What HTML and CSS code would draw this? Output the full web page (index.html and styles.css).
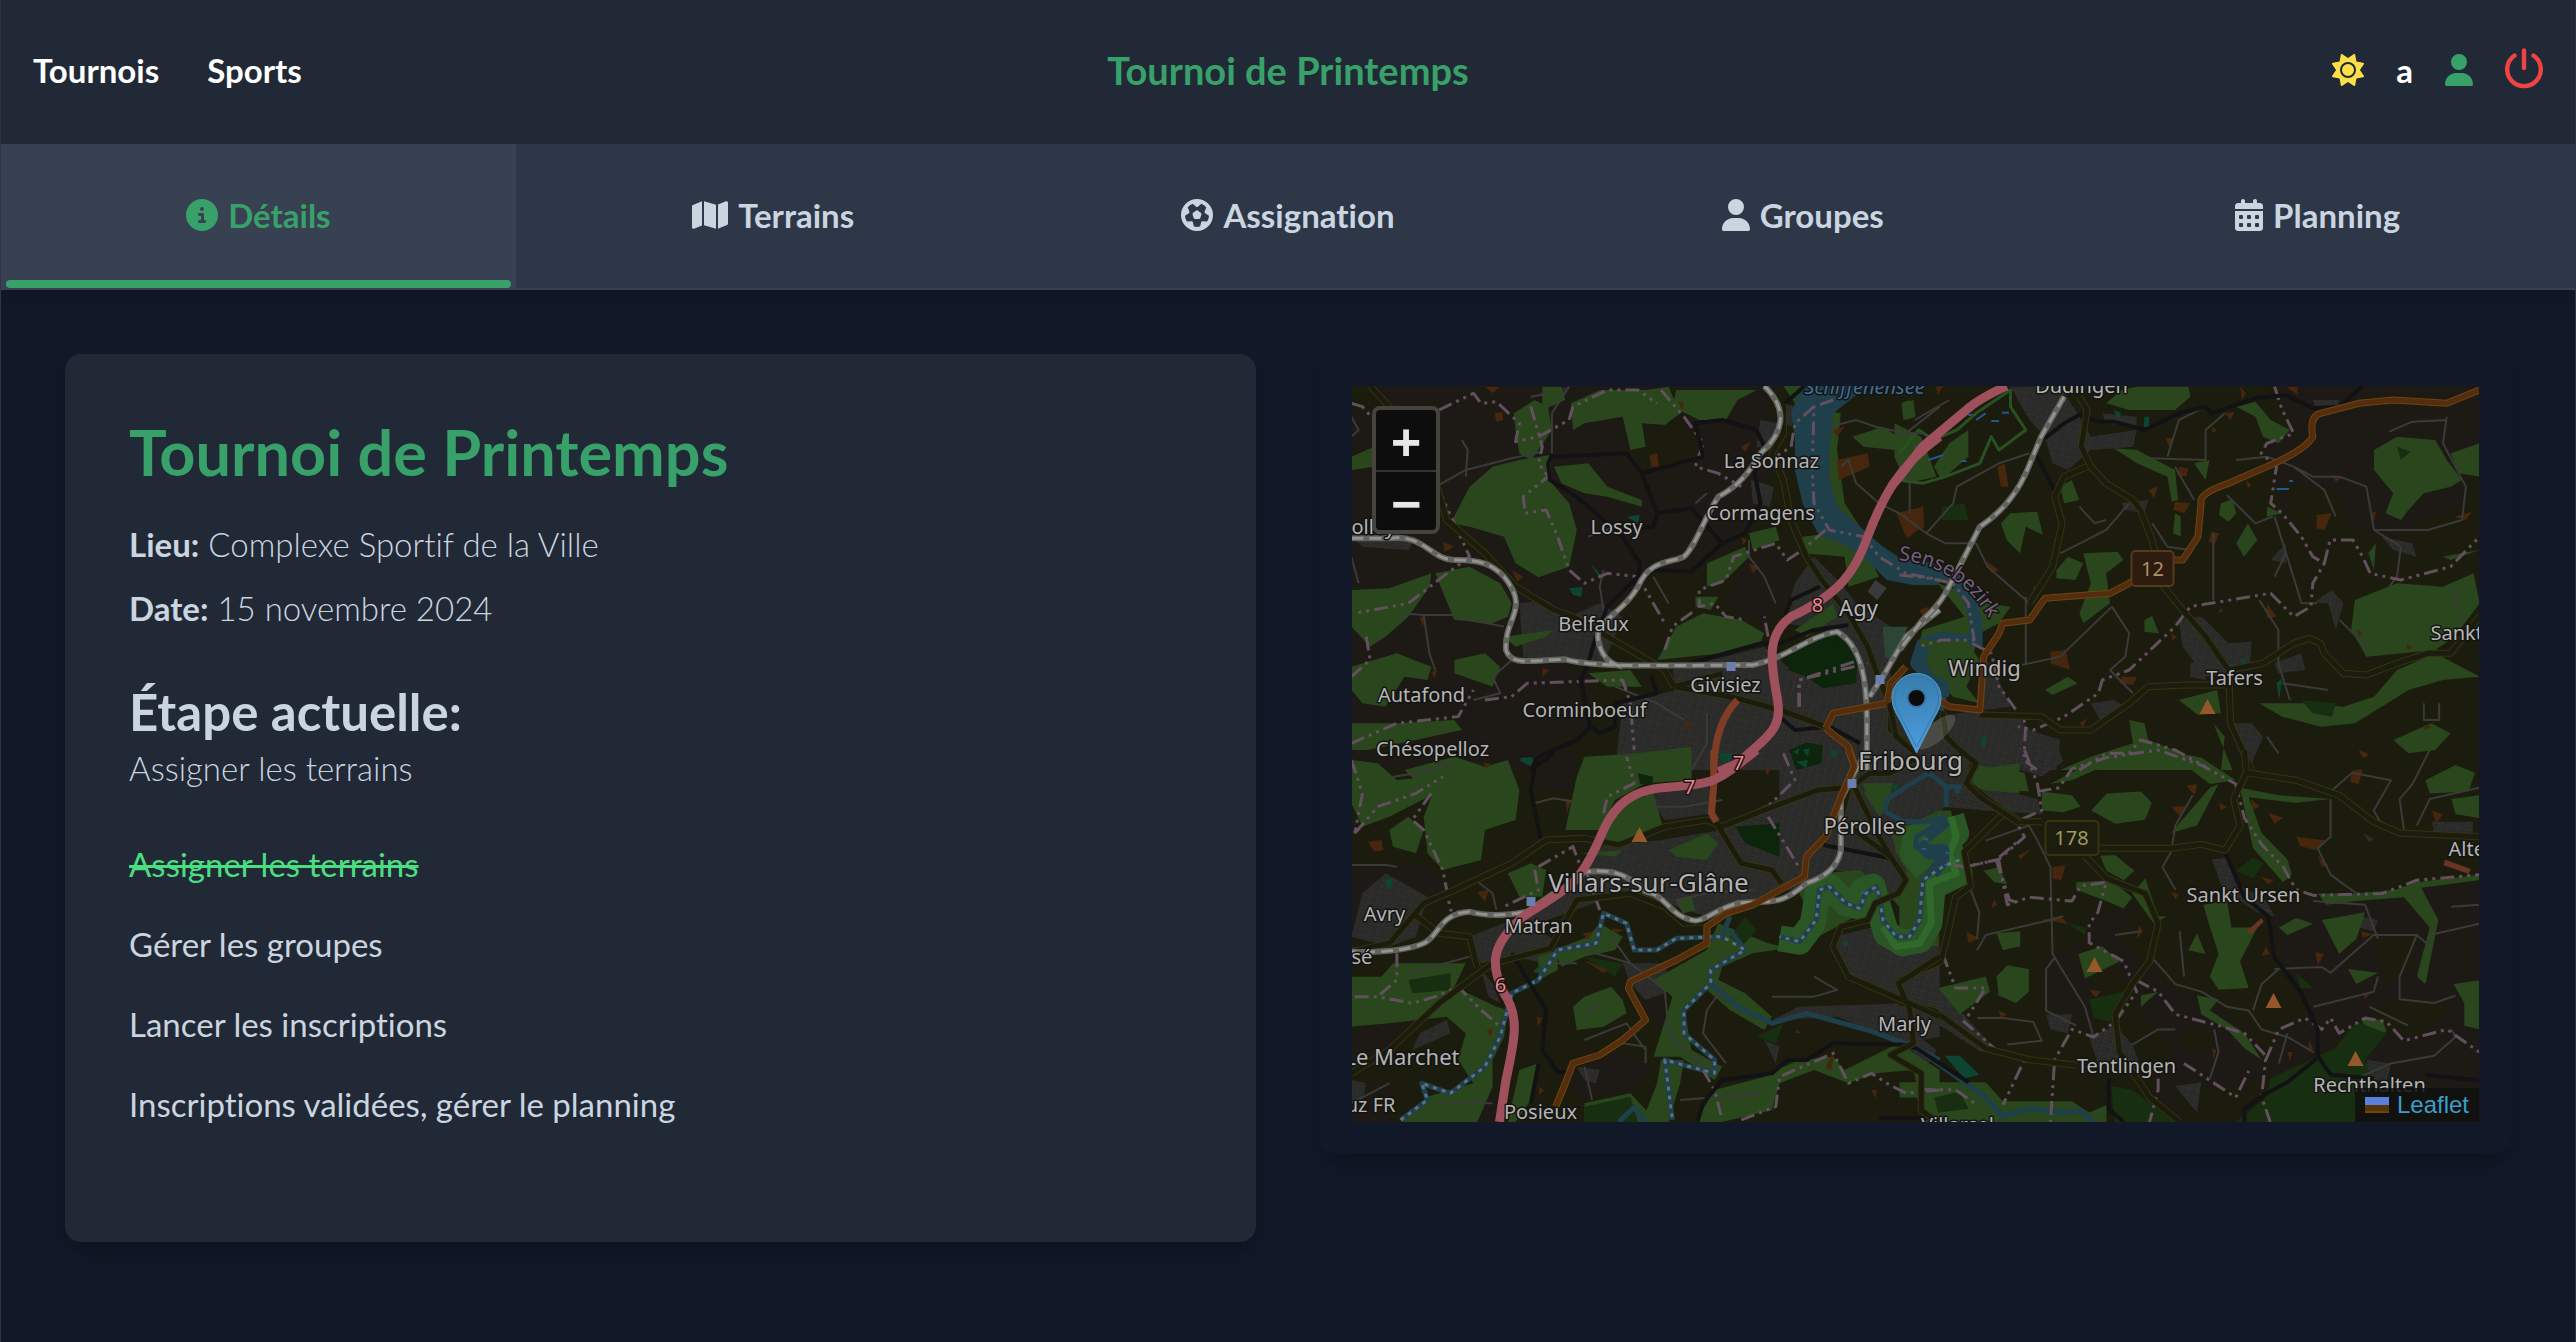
FILE: index.html
```html
<!DOCTYPE html>
<html lang="fr">
<head>
<meta charset="utf-8">
<meta name="viewport" content="width=device-width, initial-scale=1">
<title>Tournoi de Printemps</title>
<link rel="stylesheet" href="styles.css">
</head>
<body>
<header class="topbar">
  <nav class="topbar-nav" aria-label="Navigation principale">
    <a href="#tournois">Tournois</a>
    <a href="#sports">Sports</a>
  </nav>
  <p class="topbar-title">Tournoi de Printemps</p>
  <div class="topbar-user">
    <button class="icon-button sun" type="button" aria-label="Thème clair">
      <svg width="32" height="32" viewBox="0 0 512 512" fill="currentColor"><path d="M361.5 1.2c5 2.1 8.6 6.6 9.6 11.9L391 121l107.9 19.8c5.3 1 9.8 4.6 11.9 9.6s1.5 10.7-1.6 15.2L446.9 256l62.3 90.3c3.1 4.5 3.7 10.2 1.6 15.2s-6.6 8.6-11.9 9.6L391 391 371.1 498.9c-1 5.3-4.6 9.8-9.6 11.9s-10.7 1.5-15.2-1.6L256 446.9l-90.3 62.3c-4.5 3.1-10.2 3.7-15.2 1.6s-8.6-6.6-9.6-11.9L121 391 13.1 371.1c-5.3-1-9.8-4.6-11.9-9.6s-1.5-10.7 1.6-15.2L65.1 256 2.8 165.7c-3.1-4.5-3.7-10.2-1.6-15.2s6.6-8.6 11.9-9.6L121 121 140.9 13.1c1-5.3 4.6-9.8 9.6-11.9s10.7-1.5 15.2 1.6L256 65.1 346.3 2.8c4.5-3.1 10.2-3.7 15.2-1.6zM160 256a96 96 0 1 1 192 0 96 96 0 1 1 -192 0zm224 0a128 128 0 1 0 -256 0 128 128 0 1 0 256 0z"/></svg>
    </button>
    <span class="user-name">a</span>
    <a class="icon-button person" href="#profil" aria-label="Profil">
      <svg width="28" height="32" viewBox="0 0 448 512" fill="currentColor"><path d="M224 256A128 128 0 1 0 224 0a128 128 0 1 0 0 256zm-45.700 48C79.800 304 0 383.800 0 482.300C0 498.700 13.300 512 29.700 512l388.600 0c16.400 0 29.700-13.300 29.700-29.700C448 383.800 368.200 304 269.700 304l-91.400 0z"/></svg>
    </a>
    <button class="icon-button power" type="button" aria-label="Déconnexion">
      <svg width="38" height="44" viewBox="0 0 38 44" fill="none" stroke="currentColor" stroke-width="4.400" stroke-linecap="round"><path d="M9.500 7.500A16.800 16.800 0 1 0 28.500 7.500M19 2.500V20"/></svg>
    </button>
  </div>
</header>

<nav class="tabs" aria-label="Sections du tournoi">
  <a class="tab is-active" href="#details" aria-current="page">
    <svg width="32" height="32" viewBox="0 0 512 512" fill="currentColor"><path fill-rule="evenodd" d="M256 512A256 256 0 1 0 256 0a256 256 0 1 0 0 512zM216 336l24 0 0-64-24 0c-13.300 0-24-10.700-24-24s10.700-24 24-24l48 0c13.300 0 24 10.700 24 24l0 88 8 0c13.300 0 24 10.700 24 24s-10.700 24-24 24l-80 0c-13.300 0-24-10.700-24-24s10.700-24 24-24zm40-208a32 32 0 1 1 0 64 32 32 0 1 1 0-64z"/></svg>
    Détails
  </a>
  <a class="tab" href="#terrains">
    <svg width="36" height="32" viewBox="0 0 576 512" fill="currentColor"><path d="M384 476.100L192 421.200l0-385.300L384 90.800l0 385.300zm32-1.200l0-386.500L543.100 37.500c15.800-6.300 32.900 5.300 32.900 22.300l0 334.800c0 9.800-6 18.600-15.100 22.300L416 474.800zM15.100 95.100L160 37.200l0 386.500L32.900 474.500C17.100 480.800 0 469.200 0 452.200L0 117.400c0-9.800 6-18.600 15.100-22.300z"/></svg>
    Terrains
  </a>
  <a class="tab" href="#assignation">
    <svg width="32" height="32" viewBox="0 0 512 512" fill="currentColor"><path fill-rule="evenodd" d="M417.300 360.100l-71.600-4.800c-5.200-.3-10.300 1.100-14.500 4.200s-7.200 7.400-8.400 12.500l-17.600 69.600C289.500 445.800 273 448 256 448s-33.500-2.200-49.200-6.400L189.200 372c-1.300-5-4.300-9.400-8.400-12.500s-9.300-4.500-14.500-4.200l-71.600 4.800c-17.600-27.200-28.500-59.200-30.400-93.600L125 228.300c4.400-2.800 7.600-7 9.200-11.900s1.400-10.200-.5-15l-26.700-66.600C128 109.200 155.300 89 186.700 76.900l55.200 46c4 3.300 9 5.100 14.100 5.100s10.200-1.800 14.100-5.100l55.200-46c31.300 12.100 58.700 32.300 79.600 57.900l-26.700 66.600c-1.900 4.800-2.100 10.100-.5 15s4.900 9.100 9.200 11.900l60.700 38.200c-1.900 34.400-12.800 66.400-30.400 93.600zM256 512A256 256 0 1 0 256 0a256 256 0 1 0 0 512zm14.100-325.700c-8.400-6.100-19.800-6.100-28.200 0L194 221c-8.400 6.100-11.900 16.900-8.700 26.800l18.300 56.300c3.200 9.900 12.400 16.600 22.800 16.600h59.200c10.400 0 19.600-6.700 22.800-16.600l18.300-56.300c3.200-9.900-.3-20.700-8.700-26.800l-47.900-34.800z"/></svg>
    Assignation
  </a>
  <a class="tab" href="#groupes">
    <svg width="28" height="32" viewBox="0 0 448 512" fill="currentColor"><path d="M224 256A128 128 0 1 0 224 0a128 128 0 1 0 0 256zm-45.700 48C79.800 304 0 383.800 0 482.300C0 498.700 13.300 512 29.700 512l388.600 0c16.400 0 29.700-13.300 29.700-29.700C448 383.800 368.200 304 269.700 304l-91.400 0z"/></svg>
    Groupes
  </a>
  <a class="tab" href="#planning">
    <svg width="28" height="32" viewBox="0 0 448 512" fill="currentColor"><path fill-rule="evenodd" d="M128 0c17.700 0 32 14.300 32 32v32h128V32c0-17.700 14.300-32 32-32s32 14.300 32 32v32h48c26.500 0 48 21.500 48 48v48H0v-48C0 85.500 21.500 64 48 64h48V32c0-17.700 14.300-32 32-32zM0 192h448v272c0 26.500-21.500 48-48 48H48c-26.500 0-48-21.500-48-48zM64 272v32q0 16 16 16h32q16 0 16-16v-32q0-16-16-16H80q-16 0-16 16zM192 272v32q0 16 16 16h32q16 0 16-16v-32q0-16-16-16h-32q-16 0-16 16zM320 272v32q0 16 16 16h32q16 0 16-16v-32q0-16-16-16h-32q-16 0-16 16zM64 400v32q0 16 16 16h32q16 0 16-16v-32q0-16-16-16H80q-16 0-16 16zM192 400v32q0 16 16 16h32q16 0 16-16v-32q0-16-16-16h-32q-16 0-16 16zM320 400v32q0 16 16 16h32q16 0 16-16v-32q0-16-16-16h-32q-16 0-16 16z"/></svg>
    Planning
  </a>
</nav>

<main class="content">
  <section class="card details">
    <h1>Tournoi de Printemps</h1>
    <p class="fact"><strong>Lieu:</strong> Complexe Sportif de la Ville</p>
    <p class="fact"><strong>Date:</strong> 15 novembre 2024</p>
    <h2>Étape actuelle:</h2>
    <p class="step">Assigner les terrains</p>
    <ul class="steps">
      <li class="done">Assigner les terrains</li>
      <li>Gérer les groupes</li>
      <li>Lancer les inscriptions</li>
      <li>Inscriptions validées, gérer le planning</li>
    </ul>
  </section>

  <section class="card map-card" aria-label="Carte">
    <div class="map">
      <svg class="map-canvas" viewBox="0 0 1128 736" preserveAspectRatio="xMidYMid slice">
        <defs>
          <pattern id="streets" width="22" height="20" patternUnits="userSpaceOnUse" patternTransform="rotate(14)">
            <rect width="22" height="20" fill="#292928"/>
            <path d="M0 6H22M7 0V20M7 13L22 16M16 6V0" stroke="#393939" fill="none"/>
          </pattern>
          <path id="arc" d="M547 174Q612 180 644 244"/>
          <linearGradient id="pin" x1="0" y1="0" x2="0" y2="1"><stop offset="0" stop-color="#387cac"/><stop offset="1" stop-color="#4c9de0"/></linearGradient>
        </defs>
        <rect width="1128" height="736" fill="#1b1c0e"/>

        <!-- land cover, one group per tile -->
        <g transform="matrix(.3827 0 0 .3333 -12 -16)">
          <path class="soil" d="M31 48H1110L1150 250 1090 400 1060 520 960 590 830 600 760 700 600 740 480 700 470 860 660 900 650 1060 500 1160 490 1200H31Z"/>
          <path class="soil" d="M1060 560L1130 530 1190 600 1170 700 1110 770 1050 740 1010 680Z"/>
          <path class="field" d="M800 180L890 150 950 230 930 270 800 310 750 240ZM270 450L330 470 440 590 380 560 290 500ZM31 120L90 130V48H31Z"/>
          <path class="town" d="M480 860L470 700 540 690 600 740 680 700 740 740 690 880 560 880ZM870 900L1110 830 1170 890 1300 990 1380 1000 1430 1200H720L740 1000 880 960ZM1160 760L1190 640 1240 560 1310 640 1350 700 1440 770 1440 900 1400 980 1350 840 1290 780ZM1100 150L1150 160 1140 240 1090 230ZM1075 330L1135 350 1125 410 1080 400ZM31 500H200L180 540 60 530ZM1150 100L1200 110 1180 170 1150 150ZM520 70L600 50 560 110Z"/>
          <path class="wood" d="M290 460L340 350 400 290 470 270 550 255 555 340 600 400 620 480 600 590 520 622 460 580 430 500 340 470ZM455 130L510 90 545 110 555 180 520 240 500 270 470 250 460 180ZM605 100L680 60 800 60 860 50 890 130 850 165 790 160 800 230 760 240 740 140 640 160 610 180ZM880 60H1090L1040 90 1010 150 940 150 870 110ZM530 50H580L590 90 530 120ZM560 290L650 280 700 350 790 390V410L700 380 640 370 580 340ZM250 610L340 590 420 640 450 700 440 740 400 760 300 750ZM31 660L130 655 240 610 235 650 180 740 120 800 80 830 31 770ZM300 870L380 850 420 890 400 950 300 910ZM31 890L150 850 240 890 230 930 170 920 120 1010 60 1000 31 960ZM830 870L880 770 950 730 1050 750 1110 790 1100 820 1000 850ZM960 580L1060 530 1070 560 1000 640 960 650ZM930 680L990 680 970 720 930 710ZM31 260L90 230V290L31 300ZM31 1060L150 1060 300 1050 320 1080 160 1120 31 1150ZM700 1160L920 1130 910 1200H690ZM1340 200L1420 170 1460 200 1450 240 1370 230ZM1260 120L1310 130 1300 240 1320 400 1360 470 1330 520 1280 480 1250 300ZM1210 500L1280 490 1370 530 1410 620 1330 650 1320 560 1210 550ZM1160 48H1220L1190 100ZM1470 100L1500 90 1505 140 1480 150ZM1450 160L1520 200 1560 320 1480 340 1450 260ZM1070 490L1140 470 1150 510 1080 540ZM1190 780L1290 700 1300 740 1220 800ZM650 910L760 900 790 950 700 950ZM1340 900L1400 880 1400 980 1350 960ZM430 800L560 780 540 800 460 830Z"/>
          <path class="park" d="M1165 870L1230 810 1300 790 1350 830 1360 940 1300 960 1230 930ZM1180 1130L1250 1120 1260 1190 1190 1190Z"/>
          <path class="pitch" d="M600 655L635 650 632 680 610 675ZM655 578L690 625 680 625ZM1160 1040L1220 1050 1210 1070ZM470 1165L510 1160 500 1190ZM750 440L785 435 780 460ZM985 1160L1020 1150 1010 1180Z"/>
          <path class="yard" d="M380 50L420 50 400 70ZM405 130L425 125 428 150 410 155ZM810 255L830 250 835 290 815 290ZM1050 230L1075 215 1060 245ZM450 600L480 620 465 635ZM270 515L300 530 275 545ZM210 745L225 735 218 770ZM240 905L255 900 248 925ZM530 895L550 900 530 920ZM1300 270L1380 250 1385 290 1305 330ZM1455 430L1525 410 1528 470 1480 500ZM1070 580L1095 590 1080 610ZM1230 860L1250 855 1245 880ZM900 1055L920 1060 905 1085ZM1515 720L1540 710 1530 745ZM885 95L900 95 895 120ZM1050 500L1065 510 1055 525ZM1290 180L1320 170 1300 200Z"/>
          <path class="water-area" d="M1210 48H1380L1290 130 1280 240V330L1300 410 1360 470 1420 530 1500 590 1568 600V645H1500L1430 630 1370 560 1310 520 1250 490 1210 400 1190 300V200L1180 130 1190 100Z"/>
          <path fill="#2c4636" d="M1420 770L1485 770 1450 880 1425 860Z"/>
          <path fill="#3a3a3a" d="M1400 630L1430 655 1405 690 1380 665Z"/>
        </g>
        <g transform="matrix(.3827 0 0 .3333 548 -16)">
          <path class="soil" d="M970 48H1516V200L1480 400 1300 500 1190 480 1120 350 1000 430 970 300 960 200 1030 190Z"/>
          <path class="field" d="M1010 350L1120 350 1140 430 1020 400Z"/>
          <path class="town" d="M290 50H420L460 120 500 200 620 180 610 230 500 240 440 300 400 280 380 200 340 150ZM530 130L620 140 620 170 540 160ZM730 750L790 740 860 820 920 815 915 900 800 920 740 830ZM760 880L800 870 800 930 760 920ZM1080 700L1130 660 1160 700 1140 780 1120 700ZM580 400L650 390 640 430 590 420ZM1080 90L1150 90 1140 130 1090 120ZM110 1040L200 1020 310 1040 340 1080 420 1110 410 1200H60L40 1100ZM200 870L240 880 290 1010 220 1020ZM870 1060L920 1060 950 1100 920 1180ZM500 1000L560 990 590 1010 530 1060ZM1260 500L1340 520 1350 560 1290 540ZM970 570L1010 520 1010 580ZM980 880L1050 850 1060 900 990 910Z"/>
          <path class="wood" d="M540 100L580 60 620 50H755L760 80 720 120 600 120ZM880 110L930 95 970 150 1020 180 990 220 950 200 930 140ZM1240 240L1300 200 1400 210 1430 270 1470 330 1440 350 1370 370 1330 420 1310 450 1270 430 1290 370 1240 300ZM1440 250L1516 220V320L1460 310ZM265 460L290 430 360 425 375 495 330 470 315 550 280 510ZM420 350L450 330 470 390 430 400ZM410 600L440 560 480 580 460 630 410 625ZM480 550L570 545 585 570 540 610 550 700 480 760 470 730 500 640ZM640 750L660 738 678 790 640 785ZM840 400L870 388 880 430 860 455 835 435ZM890 500L910 460 935 510 900 560 880 520ZM560 235L620 240 720 300 728 390 712 395 700 320 620 280ZM720 430L735 440 735 500 715 490ZM1190 690L1300 640 1420 650 1500 610 1516 700 1450 800 1400 840 1220 860 1180 780ZM940 1000L1060 1000 1160 1010 1240 980 1300 900 1400 850 1516 920 1420 930 1330 960 1260 1010 1190 1060 1100 1070 1000 1040ZM730 990L830 960 840 1030 780 1035ZM1290 1110L1390 1060 1440 1090 1400 1140 1330 1150ZM1420 560L1516 540 1440 570ZM380 960L440 920 465 940 400 975ZM600 1050L640 1060 650 1110 740 1150 820 1200H420L500 1160 610 1120ZM130 220L180 180 180 260 110 330 90 290ZM100 640L200 680 230 700 290 710 260 760 210 790 190 860 130 870 50 830 60 780 170 740ZM820 1060L850 1100 840 1200 870 1200ZM1225 550L1245 520 1240 600ZM770 280L810 270 800 330ZM5 100L25 90 40 140 10 150ZM960 410L1000 430 960 440Z"/>
          <path class="thick" d="M110 410L170 400 180 450 110 450ZM60 840L120 850 160 890 80 910ZM1050 990L1140 1000 1130 1040 1080 1030ZM1300 230L1335 245 1310 270Z"/>
          <path class="pitch" d="M640 140L652 140V172L638 170ZM560 120L580 130 570 150ZM890 870L905 865 900 895ZM860 885L880 880 870 900ZM985 940L1000 925 992 990ZM212 1105L228 1105V1125H214Z"/>
          <path class="yard" d="M730 290L755 295 750 320 725 315ZM720 395L760 400 745 430 715 420ZM815 485L835 490 825 520 808 515ZM650 360L675 350 665 385ZM1090 435L1130 430 1110 480 1090 475ZM395 845L435 840 445 900 395 880ZM580 920L620 920 610 945 575 940ZM255 290L275 280 285 350 265 350ZM225 570L260 600 240 610ZM0 440L55 420 60 470 20 505ZM960 700L985 740 960 745ZM1130 315L1160 320 1140 335ZM1230 430L1245 425 1240 455ZM1450 440L1495 425 1480 450ZM890 50L905 70 895 90ZM850 130L875 125 865 150ZM815 170L830 180 818 190ZM695 205L715 205 705 230ZM905 330L920 345 910 355ZM1010 50H1040V75ZM95 50L115 48 100 75ZM350 650L365 655 350 690ZM55 720L75 725 60 745ZM1370 1065L1390 1070 1375 1080ZM1205 1145L1225 1155 1215 1165ZM470 1060L490 1045 480 1070ZM1195 780L1210 790 1200 800ZM1325 820L1340 830 1328 840ZM710 790L725 800 712 812ZM835 715L845 720 838 730Z"/>
          <path class="pond" d="M40 232H65M180 135H200M240 153H260M268 128H286M985 357H1018M1018 333H1028M75 270L115 255M160 273H175M200 150L225 130"/>
          <path class="reserve" d="M0 250L50 180 90 210 150 180 200 130 290 60 290 110 330 180 260 240 240 200 210 280 120 320 60 340 0 330"/>
          <path class="river wide" d="M0 580L70 595 140 620 185 690 200 760 200 830M190 815L110 805 60 825 45 880 80 920 110 960 100 1020"/>
        </g>
        <g transform="matrix(.3827 0 0 .3333 -12 364)">
          <path class="soil" d="M31 0H130L60 200 31 260ZM31 360L240 340 290 440 200 470 120 570H31ZM31 850L130 800 220 790 130 900 31 960ZM40 1010L140 1000 130 1116H31ZM690 900L820 940 760 1020 640 1050 590 1000 610 960ZM260 1060L350 1050 430 1040 410 1116H270ZM500 0L620 0 610 120 520 120ZM800 720L860 760 850 820 800 800Z"/>
          <path class="town" d="M590 430L680 290 840 270 1000 240 1100 170 1250 100 1330 0H1463V120L1320 130 1300 330 1200 400 1100 450 960 500 880 470 760 420 640 470 520 520 470 500ZM800 130L900 110 960 80 980 190 850 210ZM31 560L60 430 120 370 230 440 200 560 130 590ZM340 560L470 500 560 570 540 640 450 620 370 640ZM1290 560L1400 530 1568 520V860L1480 880 1300 800 1130 810 1200 770 1480 760 1330 680ZM370 660L400 700 420 760 390 740ZM740 640L850 640 870 720 800 750 760 700ZM210 850L280 810 290 850 190 900ZM620 950L680 960 670 1000 640 990ZM1110 870L1150 890 1140 940ZM860 820L910 910 870 880ZM1330 800L1480 830 1560 900 1540 940ZM31 990L70 1000 60 1060 31 1060Z"/>
          <path class="wood" d="M170 60L300 20 380 50 440 30 470 120 460 210 380 240 370 330 270 360 230 310 220 200 240 140ZM130 240L180 200 220 240 200 310 140 290ZM31 30L100 40 150 90 240 80 250 130 130 200 60 230 31 160ZM620 80L640 20 920 0 920 90 800 100 720 150 680 240 590 240ZM720 170L820 130 845 230 760 280 690 270ZM860 300L960 250 990 280 960 330 880 320ZM440 370L500 340 540 360 530 440 470 440ZM610 770L640 740 710 710 740 750 750 790 690 830 620 840ZM31 680H110L140 640 330 640 300 710 410 770 440 780 430 860 400 930 400 1010 360 1116H160L230 1040 350 1000 310 930 330 850 280 800 130 820 31 830ZM470 960L520 940 500 1050 460 1116H440ZM820 690L960 600 990 520 1120 580 1200 600 1250 540 1280 420 1360 380 1420 420 1390 470 1300 530 1200 590 1080 610 1000 650 990 690 1060 730 1130 800 1110 840 1020 780 960 720 900 770 920 900 1000 950 980 990 890 920 820 920 810 960 870 740ZM840 930L900 930 890 1000 860 1116H790L830 1000ZM980 1020L1110 980 1160 950 1200 930 1290 920 1320 960 1460 880 1568 960V1116H1530L1500 960 1400 970 1330 1000 1240 960 1150 1000 1130 1080 1000 1116H930ZM640 1060L760 1030 830 1116H640ZM1380 240L1568 130V520L1500 520 1440 440 1490 330ZM560 600L650 560 680 520 740 560 720 600 640 620 580 650ZM630 310L740 300 720 320ZM880 450L920 440 930 480 900 490ZM520 620L570 600 570 660 520 690Z"/>
          <path class="thick" d="M180 690L290 670 290 720 190 730ZM640 620L740 640 720 680ZM640 1070L760 1040 780 1116H640ZM1090 860L1160 820 1140 880ZM1020 560L1060 500 1090 540 1050 590Z"/>
          <path class="park" d="M1035 230L1150 220 1170 290 1150 320 1060 280ZM1180 10L1240 10 1230 50 1190 40ZM780 70L820 80 815 115 785 100Z"/>
          <path class="pitch" d="M120 390L137 385V415H125ZM990 10L1025 10 1020 40ZM470 30L500 25 490 45ZM1315 570L1330 575 1320 595ZM505 665L530 640 520 670ZM1185 15L1200 15 1195 30Z"/>
          <path class="yard" d="M75 275L110 270 115 300 90 305ZM590 145L605 150 595 190ZM360 425L390 420 380 455ZM640 630L700 660 690 670ZM710 535L745 540 720 550ZM635 550L660 545 650 570ZM515 800L530 805 518 830ZM385 840L400 835 395 860ZM1110 55L1125 60 1118 75ZM1390 1020L1405 1020 1400 1045ZM520 1010L535 1020 522 1035ZM1195 840L1205 850 1192 850ZM1270 955L1295 890 1285 960ZM375 40L395 40 385 55Z"/>
          <path class="river" d="M730 1116L770 1072 800 1116M160 1110L230 1050 215 1000 290 1030 380 950 420 860 450 730 520 690 570 600 670 580 690 490 750 520 770 600 830 600 880 565 1000 560 1020 500M1020 540L1060 600 970 660 970 700 900 780 900 850 980 930 980 970 850 930 870 1110M970 700L1040 770 1130 820 1220 790 1380 840 1500 890 1568 930"/>
        </g>
        <g transform="matrix(.4311 0 0 .3776 548 364)">
          <path class="soil" d="M440 440L560 400 500 500 560 560 620 620 760 700 830 780 850 860 740 900 640 870 660 985H560L640 800 560 700 500 560 440 520ZM340 560L420 510 430 600 470 640 450 740 380 730 340 660ZM860 440L940 380 1200 360 1345 350V985H1000L850 940 860 850 880 740 960 700 900 580Z"/>
          <path class="field" d="M1100 500L1200 490 1190 570 1130 620ZM1100 680L1220 650 1280 690 1200 760 1120 740ZM650 740L720 740 740 800 660 790Z"/>
          <path class="town" d="M30 90L120 0 150 0 190 90 320 130 330 170 200 160 100 150ZM190 0H370L380 30 330 70 220 30ZM725 290L760 285 780 350 850 400 870 440 830 430 750 370ZM440 760L500 730 540 780 560 840 460 830ZM340 700L400 700 390 750 350 740ZM1070 440L1110 450 1100 480 1065 470ZM1085 820L1140 830 1130 880 1080 870ZM1235 190L1330 190V220H1240ZM0 590L60 590 100 640 220 790 190 800 40 690 0 650ZM1075 220L1100 235 1090 245ZM0 130L100 140V200L0 170ZM640 890L700 880 690 960ZM0 390L40 400 40 480 0 490Z"/>
          <path class="wood" d="M445 160L480 115 560 110 585 140 570 185 500 195ZM330 110L400 120 420 150 380 165 330 160ZM180 40L290 60 300 110 180 100 160 70ZM350 90L480 10 600 0 700 20 780 80 720 90 650 30 560 20 480 40 400 80ZM465 280L500 278 545 320 520 345 480 320ZM790 100L880 120 1000 130 920 140 810 125 840 220 900 290 910 330 890 350 820 260ZM630 220L720 100 740 90 690 200ZM1220 80L1290 40 1335 60 1320 110 1230 115ZM1280 130L1345 120V180L1290 170ZM705 410L760 400 770 470 830 470 790 560 810 630 740 635 720 600 740 540 715 450ZM670 530L690 485 710 540ZM880 470L920 445 960 460 900 490ZM415 540L470 520 510 560 430 605ZM225 600L250 570 300 580 300 640 270 670 230 650ZM90 630L200 600 210 640 140 700ZM225 485L280 480 280 520 240 530ZM195 320L230 310 250 355 220 350ZM410 350L490 345 540 390 520 420 480 400 410 370ZM1285 620L1345 610V740L1310 730 1310 670ZM1070 710L1120 715 1130 745 1090 760ZM970 380L1060 380 1150 370 1200 350 1345 330 1345 345 1210 365 1250 450 1220 620 1200 600 1230 470 1170 390 1060 400 990 410ZM980 450L1080 430 1060 500 1020 540ZM1040 580L1110 590 1060 620ZM540 380L570 340 600 440 620 440 590 460ZM0 880L200 880 240 930 400 930 440 960 480 940 480 985H60L40 920H0ZM690 650L740 660 720 690 800 750 840 820 800 790 760 740 700 700ZM560 650L600 640 560 680ZM40 160L120 160 140 340 90 400 90 520H0V200Z"/>
          <path class="thick" d="M440 660L520 640 490 720 450 710ZM860 870L1010 790 1060 720 1130 750 1080 820 1100 880 1060 985H780L850 920ZM80 920L140 905 160 950 90 960ZM490 890L540 900 640 985H500ZM780 320L820 285 845 300 820 340ZM920 590L960 630 930 630ZM390 460L435 470 430 490Z"/>
          <path class="pitch" d="M105 810L140 810 185 860 150 870ZM250 150L260 155 252 162Z"/>
          <path class="yard" d="M920 230L990 240 965 265 930 255ZM630 150L665 148 650 175ZM665 95L690 90 685 120ZM355 310L385 305 375 345 355 340ZM855 165L890 180 870 195ZM1050 55L1075 50 1065 90 1045 85ZM1065 0L1088 10 1075 22ZM1235 160L1260 170 1245 195ZM815 130L835 150 820 158ZM220 395L226 410 212 420ZM440 635L468 638 455 655ZM555 465L565 480 550 500ZM850 520L858 540 840 545ZM965 535L985 540 970 570ZM1070 480L1100 488 1075 497ZM630 375L648 382 640 395ZM230 690L250 700 235 710ZM1075 645L1090 645 1080 660ZM950 770L960 790 948 800ZM725 790L735 795 728 820ZM275 280L305 262 280 290ZM155 480L185 500 160 510ZM838 335L868 345 855 355ZM970 280L995 305 980 310ZM740 140L760 150 745 160ZM900 800L912 800 905 825ZM330 450L375 440 390 460Z"/>
          <path fill="#6a3425" d="M1265 290L1325 315 1320 328 1262 305ZM805 480L840 445 845 455 815 487Z"/>
          <path class="river" d="M0 770L40 790 150 880 200 920 240 970 300 950 380 960 420 955 450 985"/>
        </g>
        <g transform="matrix(.3333 0 0 .3333 428 254)">
          <path class="town" d="M0 90L250 0 330 60 340 200 480 250 620 230 720 330V370L600 360 570 430 480 460 500 500 420 540 380 700 330 790 240 700 160 690 60 760 0 740Z"/>
          <path class="park" d="M25 90L60 30 140 0 200 10 235 60 230 130 130 145 80 110ZM30 330L80 308 130 315 125 370 50 390Z"/>
          <path class="wood" d="M250 430L340 430 330 490 300 530 260 470ZM330 550L420 560 380 620 400 720 350 640ZM420 0H560L600 60 560 140 600 190 520 170 430 70ZM570 390L720 370V460L610 450ZM60 760L130 700 240 690 330 760 300 800 180 800 130 840 90 830Z"/>
          <path class="pitch" d="M605 290H620V318H606ZM40 335L60 325 55 345ZM70 330L90 325 85 350ZM50 365L85 360 80 385ZM330 440L360 430 350 450ZM155 330H170V350H156Z"/>
          <path class="gorge" d="M515 530L530 580 500 600 540 700 460 740 450 850 420 900 370 910 320 880 290 780 280 740 250 750 240 800 200 790 150 740 115 760 100 850 60 905 0 895M500 560L410 590 400 640 440 690"/>
          <path class="gorge-in" d="M515 530L530 590 510 640 530 700 450 730 455 850 420 910 350 920 310 860"/>
          <path class="river" d="M445 400L380 440 320 480 318 515 370 545 440 545 500 530M450 400L500 440 540 440 530 460M500 440V500M480 550L410 590 410 620 480 620 500 650 430 720 420 840 390 890 350 890 310 840 300 770 290 740 260 760 240 805 200 790 150 740 120 750 110 840 60 905 0 890"/>
          <path class="river wide" d="M500 540L440 590M420 610L450 640 490 630 490 660 460 700M430 20L420 70 450 120 490 140 490 170"/>
          <path class="pond" d="M430 597H445M427 627H440M498 638H510M495 675H512M243 758H258"/>
        </g>

        <!-- minor roads and boundaries -->
        <g transform="matrix(.3827 0 0 .3333 -12 -16)">
          <path class="lane" d="M260 345L330 300 450 265 530 245M555 250V130L600 50M320 210L335 240 330 320M160 730L220 735 300 735 340 750 430 770M220 735L235 850 250 900M690 600L680 650 690 720M860 700L820 620M650 500L720 470M460 860L400 920 420 970 350 990M31 140L50 180 31 200M1280 170L1350 150 1400 170 1480 190 1568 110M1310 290L1330 270 1350 340 1410 400 1480 440M1490 280V430M1070 510V560L1110 620 1140 700M930 400L960 370M720 950L830 1000 900 1050M31 560L50 640M960 1030V1120L920 1200M500 80L550 70"/>
          <path class="limit" d="M31 100L60 110 90 150M260 120L350 70 370 100 410 95 470 160 460 215 520 200 600 150 610 110 700 60 780 60 830 100M840 60L900 140 950 220 930 290 990 310 1050 350M500 110L530 230 520 280 545 320 480 380 485 430 540 420 570 500 600 600 640 640 700 610 780 620 810 680 850 760M255 350L300 460 340 560 270 620 180 700 40 730M70 800L80 870 31 920M380 990L450 980 490 940 740 930 760 1000 770 1140M1270 480L1210 540 1170 570 1140 520 1030 560 1010 630 940 660 940 710 980 700 1010 740 1060 750M850 840L870 770 930 720M1200 1010V930L1380 880M31 1120L150 1060 310 1040 350 960M1120 800L1110 740"/>
          <path class="limit" d="M1290 90L1240 110 1235 300 1240 400 1280 480 1370 500 1410 560 1480 610 1568 630M1240 110L1190 160 1180 230 1140 260"/>
        </g>
        <g transform="matrix(.3827 0 0 .3333 548 -16)">
          <path class="lane" d="M0 430L70 490 120 520 200 520 230 590 340 700M70 490L140 400 150 350 260 280 340 250M700 260L730 150 800 110M650 265L800 270 800 180 850 130M720 290L770 390M855 375L930 460 975 440M880 270L960 260 1030 290 1080 320 1150 320 1220 350 1240 480M1030 290L1110 360 1140 440M1240 480L1380 480 1470 450 1480 350 1420 220 1430 140M1280 185L1340 155 1430 150M820 490L820 690M330 680V880M555 710L420 860 320 885M555 710L600 790 590 860 550 900 610 970M980 440L1010 550 980 620M1010 550L1040 660 1050 700 1090 700M940 690L990 780V880L1020 990M1240 480L1310 530 1300 620 1280 650M1150 750L1230 840M470 410L510 460 540 450M420 550L540 480 600 400M660 460L700 530 760 540M130 90L40 150M0 190H60M1450 650L1470 750M1370 1000V1050H1410V1000M1000 940L1120 960M960 1100L990 1150"/>
          <path class="limit" d="M980 50L1000 120 1030 190 960 220 945 250 985 290 970 400 1000 430 1050 500 1080 560 1110 580 1080 640 1075 710 1030 740 970 670 760 710 720 770 600 900 530 930 520 970 430 1040 350 1080 310 1070M1110 580L1125 510H1185L1210 560 1230 610 1310 630 1440 590 1516 500M190 820L240 850 260 950 330 1060 325 1170 360 1200M470 1200L540 1150 600 1150 630 1110 720 1140 800 1190"/>
          <path class="limit" d="M0 615L80 625 140 640 180 700 195 810 110 810 50 830"/>
        </g>
        <g transform="matrix(.3827 0 0 .3333 -12 364)">
          <path class="lane" d="M31 345H120L150 350M355 390L400 430 410 480M510 160L560 145 610 155M640 600L760 640 850 720 860 850 920 920 980 960M710 560L760 640M540 640L620 640M800 900L780 870 750 820 640 870M1010 700L960 780 950 850 1010 940M820 170L900 170 1000 150M900 490L880 450 960 430 1080 420M180 670L340 620M260 1060H400M640 950L660 1050M890 1050L1000 1040 1100 1030M1240 680L1300 720 1240 740 1130 740M300 40L200 70 140 80M680 760L640 800M130 1000L31 1060M800 940V890L740 880"/>
          <path class="limit" d="M31 30L60 130 40 250M40 250L100 170 200 130 270 80M240 130L190 210 220 240 270 360 290 480 330 490M40 740H100L190 760 250 740 310 710 370 780 420 830M150 610L150 690 100 740M520 350L610 290 630 350M510 360L520 420 430 470M690 190L700 140 770 100 750 20M640 350L680 480M1160 10L1190 90 1110 180M1120 200L1200 350M950 960L980 1020 1000 1110M1050 1110L1140 1070 1150 980 1230 940 1290 910 1330 1000 1390 970 1430 1000 1480 1030 1568 1020"/>
          <path class="flow" d="M160 1110L230 1050 215 1000 290 1030 380 950 420 860 450 730 520 690 570 600 670 580 690 490 750 520 770 600 830 600 880 565 1000 560 1060 600 970 660 970 700 900 780 900 850 980 930 980 970 850 930 870 1110"/>
        </g>
        <g transform="matrix(.4311 0 0 .3776 548 364)">
          <path class="lane" d="M1000 130V230L970 260 1000 330 1060 380M680 120L640 200 630 270 610 310 640 370M1230 0L1190 90 1160 130 1170 210M1345 100L1230 130 1200 200M1000 110L1050 60 1140 80 1100 160 1120 200M200 240L300 200 320 240 350 310 355 540 430 680 450 760M180 530L200 490 350 450 380 440M360 550L340 580V690L410 730M180 710L240 710 310 720 330 770 250 780M540 780L600 740 640 740M590 555L640 620 700 640 760 680 810 690 840 740 900 760 960 800M870 580L980 575 1000 590 1100 490 1200 490 1230 520M820 690L840 620 880 580M960 680L1100 640 1110 600M1110 500L1080 410 960 400M1200 490L1160 600V660L1240 670 1290 650M1090 680L1180 730M1345 460L1230 490M1060 870L1140 830 1240 810 1290 760 1280 740M730 740L740 800 720 870M500 490L560 480M165 370L185 430 180 500M900 750L880 830M1280 415L1345 410M650 480L660 600"/>
          <path class="limit" d="M290 0L320 90 330 160 270 190 290 230 230 290 150 310 110 300M230 290L250 410 300 390 400 400 420 360 480 350 460 430 440 460 440 510 520 560 550 640 500 720 450 760 400 740 360 820 350 985M320 110L370 100 400 50 480 20 600 0 700 40 780 90 800 180 840 250 890 310 920 370 960 385 1120 380 1200 345 1345 330M550 610L600 640 640 700 740 730 800 750 850 810 840 920 860 985M660 830L700 860 780 920 810 850M850 820L880 740 940 710 980 740 1000 710 1020 750 1080 710 1130 720 1170 770 1270 740 1345 800M230 800L290 820 240 940M100 540L130 630 200 630 150 720 230 800M600 870V900L580 985M50 900L130 900 180 940"/>
        </g>
        <g transform="matrix(.3333 0 0 .3333 428 254)">
          <path class="flow" d="M540 660L490 680 430 720 420 840 390 890 350 890 310 840 300 770 290 740 260 760 240 805 200 790 150 740 120 750 110 840 60 905 0 890"/>
          <path class="limit" d="M560 680L650 660 720 600M650 660L690 780 720 790M60 200V120L240 60"/>
        </g>

        <!-- local roads -->
        <g transform="matrix(.3827 0 0 .3333 -12 -16)">
          <path class="local" d="M555 255L545 280 550 330 620 380 680 440 740 500 785 580 780 620 700 710 670 800 650 880 630 930 655 1070 620 1110 520 1160 500 1200M555 260L750 250 790 310 830 430 920 415 1000 520M830 430L820 470 740 480M790 310L950 260 930 160 1000 150 1090 180 1110 230 1085 310 1100 400 1060 490 1000 520 920 605 820 600 780 640M915 880L1100 820 1140 825 1240 780 1330 765M1255 650L1180 690 1150 780M1160 105L1215 48M655 1070L680 1090 720 1070 720 1000 830 970M830 970L815 920M1150 1040L1190 1080 1280 1070 1360 1120"/>
        </g>
        <g transform="matrix(.3827 0 0 .3333 548 -16)">
          <path class="local" d="M380 205L430 160 470 135 520 155 560 155 640 180 730 130 800 110 815 130 930 85 1010 75 1080 115 1150 110 1210 48M355 250L405 360"/>
        </g>
        <g transform="matrix(.3827 0 0 .3333 -12 364)">
          <path class="local" d="M560 10L510 50 500 120 525 265M450 610L540 780 530 900 570 965 600 965M520 940L500 1060M935 1116L950 1060 1000 990 1130 970 1170 930 1220 930 1290 880 1500 885M1265 285L1440 325M1410 1105H1540"/>
        </g>
        <g transform="matrix(.4311 0 0 .3776 548 364)">
          <path class="local" d="M755 270L800 390 855 440 870 550 930 640 970 740V810L1000 860 1100 870M970 815L900 880 850 910 800 950V985M485 870V950L520 985M1220 860L1345 875M0 780L40 790 160 880"/>
        </g>

        <!-- railways, secondary and main roads -->
        <g transform="matrix(.3827 0 0 .3333 -12 -16)">
          <path class="road-edge" d="M80 48L130 110 250 330 280 450 380 550 460 650 560 720 610 740 700 800 850 900 875 950M1160 100V190L1130 250 1160 330 1180 450 1220 560 1260 630 1330 730 1380 830 1410 930 1440 1000V1080L1500 1140M875 950L1040 985 1150 1020 1270 1070M875 950L1000 910"/>
          <path class="road" d="M80 48L130 110 250 330 280 450 380 550 460 650 560 720 610 740 700 800 850 900 875 950M1160 100V190L1130 250 1160 330 1180 450 1220 560 1260 630 1330 730 1380 830 1410 930 1440 1000V1080L1500 1140M875 950L1040 985 1150 1020 1270 1070M875 950L1000 910"/>
          <path class="rail" d="M31 505H130C220 490 240 570 300 570C370 568 400 585 430 620C500 720 430 740 435 840C450 890 500 870 590 868C660 890 760 888 1080 885C1180 860 1220 800 1300 785C1370 830 1378 950 1378 1060V1200M1110 48C1175 120 1160 190 1100 250C1070 310 1040 350 990 380C950 450 930 530 900 560C860 580 810 570 780 650C740 730 675 750 675 800C680 860 710 885 740 890M1568 720L1480 800 1420 920 1385 980"/>
          <path class="rail-core" d="M31 505H130C220 490 240 570 300 570C370 568 400 585 430 620C500 720 430 740 435 840C450 890 500 870 590 868C660 890 760 888 1080 885C1180 860 1220 800 1300 785C1370 830 1378 950 1378 1060V1200M1110 48C1175 120 1160 190 1100 250C1070 310 1040 350 990 380C950 450 930 530 900 560C860 580 810 570 780 650C740 730 675 750 675 800C680 860 710 885 740 890M1568 720L1480 800 1420 920 1385 980"/>
          <path class="main-edge" d="M1270 1075L1290 1030 1430 1000 1440 940 1480 890M1270 1075L1330 1130 1350 1200"/>
          <path class="main" d="M1270 1075L1290 1030 1430 1000 1440 940 1480 890M1270 1075L1330 1130 1350 1200"/>
          <path class="link" d="M1040 990Q980 1060 978 1200"/>
          <path class="motorway" d="M1568 200C1460 290 1420 380 1380 500C1350 600 1310 670 1180 740C1120 790 1125 860 1140 960C1160 1070 1140 1080 1040 1180L990 1205"/>
        </g>
        <g transform="matrix(.3827 0 0 .3333 548 -16)">
          <path class="road-edge" d="M470 80L490 120 475 230 500 290 540 340 610 390 630 420 660 510 690 650 740 720 800 800 860 900 865 1060 920 1200M490 290L430 320 405 380 425 460 400 590 340 700M860 900L950 880 1030 820 1070 805 1100 820 1110 850 1160 910 1220 915 1300 880 1380 850 1440 850 1516 740M860 945H750L650 950 600 1000 500 1080 420 1080 370 1040 210 1035"/>
          <path class="road" d="M470 80L490 120 475 230 500 290 540 340 610 390 630 420 660 510 690 650 740 720 800 800 860 900 865 1060 920 1200M490 290L430 320 405 380 425 460 400 590 340 700M860 900L950 880 1030 820 1070 805 1100 820 1110 850 1160 910 1220 915 1300 880 1380 850 1440 850 1516 740M860 945H750L650 950 600 1000 500 1080 420 1080 370 1040 210 1035"/>
          <path class="rail" d="M430 80L370 200 330 310Q290 410 210 470L170 560 120 670Q100 710 60 750L0 840"/>
          <path class="rail-core" d="M430 80L370 200 330 310Q290 410 210 470L170 560 120 670Q100 710 60 750L0 840"/>
          <path class="main-edge" d="M1516 60L1430 100 1290 90 1200 100 1100 130Q1070 140 1080 200Q1060 240 960 290L860 340Q780 370 788 400L780 500 740 570H700L600 640 550 670 380 685 340 750 270 760 260 790 220 860 210 1020 130 1010 90 980"/>
          <path class="main" d="M1516 60L1430 100 1290 90 1200 100 1100 130Q1070 140 1080 200Q1060 240 960 290L860 340Q780 370 788 400L780 500 740 570H700L600 640 550 670 380 685 340 750 270 760 260 790 220 860 210 1020 130 1010 90 980"/>
          <path class="motorway" d="M-22 350L0 320 60 230 180 115Q210 85 280 48"/>
        </g>
        <g transform="matrix(.4311 0 0 .3776 548 364)">
          <path class="road-edge" d="M800 0L805 60 775 130 790 200 755 265 700 250 630 260 460 260M805 60L920 80 1020 120 1100 190 1160 220 1345 230M430 280L480 340 570 380 600 460 580 560 540 620 500 700 510 800 580 920 650 985M170 30L160 90 240 160 280 190H330M240 170L150 270 165 360 130 390 105 520 95 560 0 610M0 670L80 690 200 790 300 820 410 835"/>
          <path class="road" d="M800 0L805 60 775 130 790 200 755 265 700 250 630 260 460 260M805 60L920 80 1020 120 1100 190 1160 220 1345 230M430 280L480 340 570 380 600 460 580 560 540 620 500 700 510 800 580 920 650 985M170 30L160 90 240 160 280 190H330M240 170L150 270 165 360 130 390 105 520 95 560 0 610M0 670L80 690 200 790 300 820 410 835"/>
        </g>
        <g transform="matrix(.3827 0 0 .3333 -12 364)">
          <path class="road-edge" d="M31 605L130 580 220 460 300 420 450 340 540 270 640 265 730 285 850 230 960 210 1000 230 1110 180 1250 120 1310 115M985 220L1050 340 1130 360 1155 400M31 970L130 900 260 760 400 640 550 595 620 450 760 430 850 470 900 520 960 515M190 490L260 550 340 560 360 650M1330 120L1310 210 1440 320 1480 390 1460 430 1400 460 1380 510 1310 530 1290 590 1330 680 1490 760 1568 800M1345 110L1400 240 1440 320M1568 620L1460 700 1490 780 1500 880 1440 915 1520 970V1080L1560 1116"/>
          <path class="road" d="M31 605L130 580 220 460 300 420 450 340 540 270 640 265 730 285 850 230 960 210 1000 230 1110 180 1250 120 1310 115M985 220L1050 340 1130 360 1155 400M31 970L130 900 260 760 400 640 550 595 620 450 760 430 850 470 900 520 960 515M190 490L260 550 340 560 360 650M1330 120L1310 210 1440 320 1480 390 1460 430 1400 460 1380 510 1310 530 1290 590 1330 680 1490 760 1568 800M1345 110L1400 240 1440 320M1568 620L1460 700 1490 780 1500 880 1440 915 1520 970V1080L1560 1116"/>
          <path class="rail" d="M1378 0L1340 80 1310 150V300Q1300 370 1220 400C1150 470 1130 450 1040 460C980 480 960 510 930 512C860 500 860 440 800 425C740 360 700 360 640 365M560 430L490 485Q400 505 340 485C260 490 260 560 220 580Q160 610 31 605"/>
          <path class="rail-core" d="M1378 0L1340 80 1310 150V300Q1300 370 1220 400C1150 470 1130 450 1040 460C980 480 960 510 930 512C860 500 860 440 800 425C740 360 700 360 640 365M560 430L490 485Q400 505 340 485C260 490 260 560 220 580Q160 610 31 605"/>
          <path class="main-edge" d="M1330 0L1345 50 1310 140 1270 260 1220 320 1215 380 1150 420 1080 465 1010 490 960 530V580L880 630 760 695 755 715 800 810 740 870 680 915 610 940 590 1000 565 1070"/>
          <path class="main" d="M1330 0L1345 50 1310 140 1270 260 1220 320 1215 380 1150 420 1080 465 1010 490 960 530V580L880 630 760 695 755 715 800 810 740 870 680 915 610 940 590 1000 565 1070"/>
          <path class="link" d="M978 0V100L972 190 985 215"/>
          <path class="motorway" d="M1090 0L1040 45C970 110 940 100 860 112C720 120 700 220 670 290C620 410 600 410 480 500C400 580 390 640 430 730C470 800 460 860 435 990L418 1116"/>
        </g>
        <g transform="matrix(.3333 0 0 .3333 428 254)">
          <path class="road-edge" d="M330 190L350 290 410 340M490 215L500 290 540 330 590 370 560 430 600 470 660 510 720 550M230 430L270 400 330 400 420 350"/>
          <path class="road" d="M330 190L350 290 410 340M490 215L500 290 540 330 590 370 560 430 600 470 660 510 720 550M230 430L270 400 330 400 420 350"/>
        </g>

        <!-- stations and summits -->
        <path fill="#6b7eb0" d="M375 276h9v9h-9zM524 289h9v9h-9zM496 393h9v9h-9zM175 511h9v9h-9z"/>
        <path fill="#94582a" d="M848 328l8-15 8 15zM280 456l8-15 8 15zM735 586l8-15 8 15zM914 622l8-15 8 15zM996 680l8-15 8 15z"/>
        <rect x="780" y="165" width="42" height="35" rx="4" fill="#2c1b0e" stroke="#57391b" stroke-width="2"/>
        <rect x="694" y="435" width="53" height="34" rx="4" fill="#1c1d0e" stroke="#34350f" stroke-width="2"/>

        <g class="labels">
          <text x="420" y="82">La Sonnaz</text>
          <text x="409" y="134">Cormagens</text>
          <text x="265" y="148">Lossy</text>
          <text x="242" y="245">Belfaux</text>
          <text class="town-name" x="507" y="230">Agy</text>
          <text x="374" y="306">Givisiez</text>
          <text x="70" y="316">Autafond</text>
          <text x="233" y="331">Corminboeuf</text>
          <text x="81" y="370">Chésopelloz</text>
          <text class="from-left" x="0" y="148">olley</text>
          <text x="730" y="7">Düdingen</text>
          <text class="town-name" x="633" y="290">Windig</text>
          <text x="883" y="299">Tafers</text>
          <text class="from-left" x="1079" y="254">Sankt Antoni</text>
          <text class="city-name" x="559" y="384">Fribourg</text>
          <text class="town-name" x="513" y="448">Pérolles</text>
          <text class="city-name" x="297" y="506">Villars-sur-Glâne</text>
          <text x="33" y="535">Avry</text>
          <text x="187" y="547">Matran</text>
          <text class="from-left" x="0" y="578">sé</text>
          <text class="town-name to-right" x="108" y="679">Le Marchet</text>
          <text class="to-right" x="44" y="726">uz FR</text>
          <text x="189" y="733">Posieux</text>
          <text x="553" y="645">Marly</text>
          <text x="892" y="516">Sankt Ursen</text>
          <text class="from-left" x="1097" y="470">Alterswil</text>
          <text x="775" y="687">Tentlingen</text>
          <text x="1018" y="706">Rechthalten</text>
          <text x="606" y="746">Villarsel</text>
          <text class="lake" x="513" y="8">Schiffenensee</text>
          <text class="district"><textPath href="#arc">Sensebezirk</textPath></text>
          <text class="exit" x="466" y="226">8</text>
          <text class="exit" x="338" y="408">7</text>
          <text class="exit" x="387" y="384">7</text>
          <text class="exit" x="149" y="606">6</text>
          <text class="ref" x="801" y="190">12</text>
          <text class="ref minor" x="720" y="459">178</text>
        </g>

        <!-- tournament location -->
        <ellipse cx="585" cy="346" rx="24" ry="9" fill="#b5b5a8" opacity=".22" transform="rotate(-42 585 346)"/>
        <path d="M565 287.500C551 287.500 540.500 298.500 540.500 312C540.500 321 545 328 549 335L565 367 581 335C585 328 589.500 321 589.500 312C589.500 298.500 579 287.500 565 287.500Z" fill="url(#pin)" stroke="#4f9fd6"/>
        <path d="M565 290C552.500 290 543 300 543 312C543 320.500 547 327 551 334L565 361 579 334C583 327 587 320.500 587 312C587 300 577.500 290 565 290Z" fill="none" stroke="#3877a8"/>
        <circle cx="565" cy="312" r="9" fill="#0b0b0b" stroke="#3877a8" stroke-width="2"/>
      </svg>
      <div class="zoom">
        <button type="button" aria-label="Zoomer">+</button>
        <button type="button" aria-label="Dézoomer">−</button>
      </div>
      <a class="attribution" href="#leaflet">
        <svg width="24" height="16" viewBox="0 0 24 16"><path fill="#5a80db" d="M0 0h24v8H0z"/><path fill="#573408" d="M0 8h24v8H0z"/><path fill="#6b4808" d="M0 14h24v2H0z"/></svg>
        Leaflet
      </a>
    </div>
  </section>
</main>
</body>
</html>
```

FILE: styles.css
```css
* { box-sizing: border-box; }

body {
  margin: 0;
  min-height: 100vh;
  border: solid #2d3646;
  border-width: 0 1px;
  background: #111827;
  color: #cbd5e0;
  font-family: Lato, "Open Sans", sans-serif;
  font-size: 33px;
  font-variant-ligatures: none;
  line-height: 48px;
}

a { color: inherit; text-decoration: none; }

button {
  padding: 0;
  border: 0;
  background: none;
  color: inherit;
  font: inherit;
}

h1, h2, p, ul { margin: 0; padding: 0; }

svg { display: block; }

/* Top bar */
.topbar {
  display: grid;
  grid-template-columns: 1fr auto 1fr;
  align-items: center;
  height: 144px;
  padding: 0 32px 4px;
  background: #212936;
  color: #fff;
  font-weight: 700;
}

.topbar-nav { display: flex; gap: 48px; }

.topbar-title { color: #38a169; font-size: 38px; }

.topbar-user {
  display: flex;
  align-items: center;
  justify-content: flex-end;
  gap: 32px;
}

.icon-button { display: flex; }
.sun { color: #fde047; }
.person { color: #38a169; }
.power { color: #ef4444; }

/* Tabs */
.tabs {
  position: relative;
  display: flex;
  height: 146px;
  border-bottom: 2px solid #374151;
  background: #2d3748;
  box-shadow: 0 8px 12px rgba(0, 0, 0, 0.1);
  font-weight: 700;
}

.tab {
  position: relative;
  display: flex;
  flex: 1;
  align-items: center;
  justify-content: center;
  gap: 10px;
  padding-bottom: 2px;
}

.tab.is-active { background: #384151; color: #38a169; }

.tab.is-active::after {
  content: "";
  position: absolute;
  right: 5px;
  bottom: 0;
  left: 5px;
  height: 8px;
  border-radius: 4px;
  background: #38a169;
}

/* Content */
.content {
  display: grid;
  grid-template-columns: 1fr 1fr;
  align-items: start;
  gap: 64px;
  padding: 64px;
}

.card {
  border-radius: 16px;
  box-shadow: 0 20px 30px -6px rgba(0, 0, 0, 0.12), 0 8px 12px -4px rgba(0, 0, 0, 0.08);
}

.details { padding: 62px 64px 66px; background: #212936; }

.details h1 {
  margin-bottom: 32px;
  color: #38a169;
  font-size: 63px;
  line-height: 72px;
}

.fact { margin-bottom: 16px; font-weight: 300; }
.fact strong { font-weight: 700; }

.details h2 {
  margin-top: 48px;
  font-size: 51px;
  line-height: 64px;
}

.step { font-weight: 300; }

.steps {
  display: flex;
  flex-direction: column;
  gap: 32px;
  margin-top: 48px;
  padding-bottom: 48px;
  list-style: none;
}

.done { color: #4ade80; text-decoration: line-through; text-decoration-thickness: 3px; }

/* Map */
.map-card { padding: 32px; }

.map {
  position: relative;
  height: 736px;
  overflow: hidden;
  background: #1b1c0e;
}

.map-canvas { width: 100%; height: 100%; }
.map-canvas path { vector-effect: non-scaling-stroke; stroke-linejoin: round; }

.soil { fill: #1d1915; }
.field { fill: #1b1c0e; }
.wood { fill: #29461d; }
.thick { fill: #182e10; }
.park { fill: #0c250b; }
.town { fill: url(#streets); }
.pitch { fill: #0d4530; }
.yard { fill: #47260e; }
.water-area { fill: #1f3f4b; }

.pond, .reserve, .river, .gorge, .gorge-in, .lane, .limit, .flow,
.local, .road, .road-edge, .rail, .rail-core, .main, .main-edge, .link, .motorway { fill: none; }

.pond { stroke: #22588a; stroke-width: 2; }
.reserve { stroke: #285023; stroke-width: 3; }
.river { stroke: #1f3f4b; stroke-width: 5; }
.river.wide { stroke-width: 13; }
.gorge { stroke: #2a5524; stroke-width: 26; }
.gorge-in { stroke: #2f6a2c; stroke-width: 7; }
.lane { stroke: #3a3a39; stroke-width: 2; }
.limit { stroke: #63505f; stroke-width: 3; stroke-dasharray: 14 5 3 5 3 5; }
.flow { stroke: #5b7085; stroke-width: 3; stroke-dasharray: 4 5; }
.local { stroke: #121214; stroke-width: 4; }
.road-edge { stroke: #34350f; stroke-width: 7; }
.road { stroke: #1b1c0d; stroke-width: 5; }
.rail { stroke: #62625f; stroke-width: 6; }
.rail-core { stroke: #92928f; stroke-width: 3; stroke-dasharray: 12 6; }
.main-edge { stroke: #6f450f; stroke-width: 7; }
.main { stroke: #532d0e; stroke-width: 5; }
.link { stroke: #803d26; stroke-width: 7; }
.motorway { stroke: #9e505d; stroke-width: 9; }

.labels {
  fill: #b4b4b2;
  stroke: #141414;
  stroke-width: 3px;
  stroke-linejoin: round;
  paint-order: stroke;
  font-family: "Noto Sans", sans-serif;
  font-size: 20px;
  text-anchor: middle;
}

.town-name { font-size: 22px; }
.city-name { font-size: 26px; }
.from-left, .district { text-anchor: start; }
.to-right { text-anchor: end; }
.lake { fill: #3f6e93; font-style: italic; }
.district { fill: #755f78; }
.exit { fill: #f0898d; }
.ref { fill: #ac9165; stroke: none; }
.ref.minor { fill: #9c9c5c; }

.zoom {
  position: absolute;
  top: 20px;
  left: 20px;
  width: 68px;
  border: 4px solid #45433c;
  border-radius: 8px;
  background: #0d0d0d;
}

.zoom button {
  display: block;
  width: 60px;
  height: 60px;
  padding-top: 14px;
  color: #e8e8e8;
  font-family: "Liberation Mono", monospace;
  font-size: 52px;
  font-weight: 700;
  line-height: 46px;
}

.zoom button + button { border-top: 2px solid #333; }

.attribution {
  position: absolute;
  right: 0;
  bottom: 0;
  display: flex;
  align-items: center;
  gap: 8px;
  height: 34px;
  padding: 0 10px;
  background: rgba(15, 16, 14, 0.85);
  color: #3b9fcd;
  font-family: "Liberation Sans", Arial, sans-serif;
  font-size: 24px;
  line-height: 34px;
}

@media (max-width: 1400px) {
  .content { grid-template-columns: 1fr; }
}
```
